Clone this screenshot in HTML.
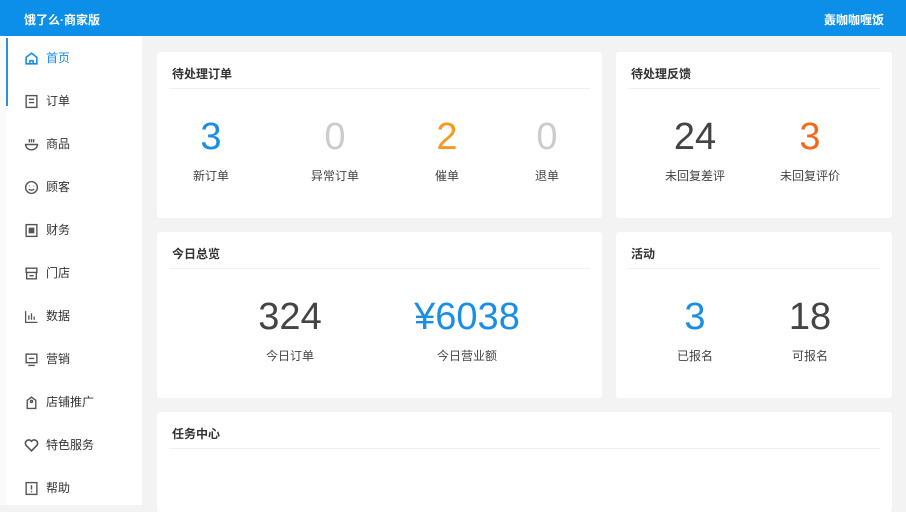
<!DOCTYPE html>
<html><head><meta charset="utf-8"><style>
*{margin:0;padding:0;box-sizing:border-box}
body{width:906px;height:505px;overflow:hidden;background:#f3f3f3;font-family:"Liberation Sans","Noto Sans CJK SC",sans-serif;position:relative;color:#333}
.hd{position:absolute;left:0;top:0;width:906px;height:36px;background:#0b8fe8;color:#fff;font-size:12px;font-weight:bold}
.hd .l{position:absolute;left:24px;top:11px}
.hd .r{position:absolute;right:22px;top:11px}
.sb{position:absolute;left:6px;top:36px;width:136px;height:469px;background:#fff}
.edge{position:absolute;left:0;top:36px;width:6px;height:469px;background:#fafafa}
.act{position:absolute;left:6px;top:38px;width:2px;height:68px;background:#2a8fe0}
.it{position:absolute;left:24px;font-size:12px;color:#333;height:16px;line-height:16px}
.it svg{position:absolute;left:0;top:1px}
.it span{position:absolute;left:22px;white-space:nowrap}
.card{position:absolute;background:#fff;border-radius:3px}
.t{position:absolute;left:15px;top:13px;font-size:12px;font-weight:bold;color:#333}
.ln{position:absolute;left:12px;right:12px;top:36px;height:1px;background:#f0f0f0}
.n{position:absolute;text-align:center;font-size:38px;line-height:40px;width:120px;margin-left:-60px}
.lb{position:absolute;text-align:center;font-size:12px;color:#444;width:120px;margin-left:-60px}
</style></head><body>
<div class="hd"><div class="l">饿了么·商家版</div><div class="r">轰咖咖喱饭</div></div>
<div class="edge"></div>
<div class="sb"></div>
<div class="act"></div>
<div class="it" style="top:50px;color:#1a8ee6"><svg width="15" height="15" viewBox="0 0 14 14" fill="none" stroke="#1a8ee6" stroke-width="1.5"><path d="M2 6L7 2L12 6V12H2Z"/><path d="M5.5 12V9h3v3"/></svg><span>首页</span></div>
<div class="it" style="top:93px"><svg width="15" height="15" viewBox="0 0 14 14" fill="none" stroke="#555" stroke-width="1.3"><rect x="2" y="1.5" width="10" height="11"/><path d="M4.5 5h5M4.5 8h5"/></svg><span>订单</span></div>
<div class="it" style="top:136px"><svg width="15" height="15" viewBox="0 0 14 14" fill="none" stroke="#555" stroke-width="1.3"><path d="M1.5 7h11a5.5 5 0 0 1-11 0Z"/><path d="M5 2v3M7 2v3M9 2v3"/></svg><span>商品</span></div>
<div class="it" style="top:179px"><svg width="15" height="15" viewBox="0 0 14 14" fill="none" stroke="#555" stroke-width="1.3"><circle cx="7" cy="7" r="5.5"/><path d="M4.5 8.5q2.5 2 5 0M5 5.5h.5M9 5.5h.5"/></svg><span>顾客</span></div>
<div class="it" style="top:222px"><svg width="15" height="15" viewBox="0 0 14 14" fill="none" stroke="#555" stroke-width="1.3"><rect x="2" y="1.5" width="10" height="11"/><rect x="5" y="5" width="4" height="4" fill="#555"/></svg><span>财务</span></div>
<div class="it" style="top:265px"><svg width="15" height="15" viewBox="0 0 14 14" fill="none" stroke="#555" stroke-width="1.3"><path d="M2 2h10v4H2zM2.5 6v6h9V6M5 9h4"/></svg><span>门店</span></div>
<div class="it" style="top:308px"><svg width="15" height="15" viewBox="0 0 14 14" fill="none" stroke="#555" stroke-width="1.2"><path d="M1.5 2v10.5h11M4.5 10V6M7 10V4M9.5 10V7"/></svg><span>数据</span></div>
<div class="it" style="top:351px"><svg width="15" height="15" viewBox="0 0 14 14" fill="none" stroke="#555" stroke-width="1.3"><rect x="2" y="2" width="10" height="8"/><path d="M4 12.5h6M4.5 6h5"/></svg><span>营销</span></div>
<div class="it" style="top:394px"><svg width="15" height="15" viewBox="0 0 14 14" fill="none" stroke="#555" stroke-width="1.3"><path d="M3 12.5V5L7 2L11 5v7.5Z"/><circle cx="7" cy="6" r="1"/></svg><span>店铺推广</span></div>
<div class="it" style="top:437px"><svg width="15" height="15" viewBox="0 0 14 14" fill="none" stroke="#555" stroke-width="1.5"><path d="M7 12L2 7a3 3 0 0 1 5-4a3 3 0 0 1 5 4Z"/></svg><span>特色服务</span></div>
<div class="it" style="top:480px"><svg width="15" height="15" viewBox="0 0 14 14" fill="none" stroke="#555" stroke-width="1.3"><rect x="2" y="1.5" width="10" height="11"/><path d="M7 4v4M7 9.5v1"/></svg><span>帮助</span></div>

<div class="card" style="left:157px;top:52px;width:445px;height:166px"><div class="t">待处理订单</div><div class="ln"></div>
<div class="n" style="left:54px;top:65px;color:#1a8ee6">3</div><div class="lb" style="left:54px;top:115px">新订单</div>
<div class="n" style="left:178px;top:65px;color:#ccc">0</div><div class="lb" style="left:178px;top:115px">异常订单</div>
<div class="n" style="left:290px;top:65px;color:#f79a1c">2</div><div class="lb" style="left:290px;top:115px">催单</div>
<div class="n" style="left:390px;top:65px;color:#ccc">0</div><div class="lb" style="left:390px;top:115px">退单</div>
</div>
<div class="card" style="left:616px;top:52px;width:276px;height:166px"><div class="t">待处理反馈</div><div class="ln"></div>
<div class="n" style="left:79px;top:65px;color:#444">24</div><div class="lb" style="left:79px;top:115px">未回复差评</div>
<div class="n" style="left:194px;top:65px;color:#f06a1c">3</div><div class="lb" style="left:194px;top:115px">未回复评价</div>
</div>
<div class="card" style="left:157px;top:232px;width:445px;height:166px"><div class="t">今日总览</div><div class="ln"></div>
<div class="n" style="left:133px;top:65px;color:#444;width:160px;margin-left:-80px">324</div><div class="lb" style="left:133px;top:115px">今日订单</div>
<div class="n" style="left:310px;top:65px;color:#1a8ee6;width:180px;margin-left:-90px">¥6038</div><div class="lb" style="left:310px;top:115px">今日营业额</div>
</div>
<div class="card" style="left:616px;top:232px;width:276px;height:166px"><div class="t">活动</div><div class="ln"></div>
<div class="n" style="left:79px;top:65px;color:#1a8ee6">3</div><div class="lb" style="left:79px;top:115px">已报名</div>
<div class="n" style="left:194px;top:65px;color:#444">18</div><div class="lb" style="left:194px;top:115px">可报名</div>
</div>
<div class="card" style="left:157px;top:412px;width:735px;height:100px"><div class="t">任务中心</div><div class="ln"></div></div>
</body></html>
